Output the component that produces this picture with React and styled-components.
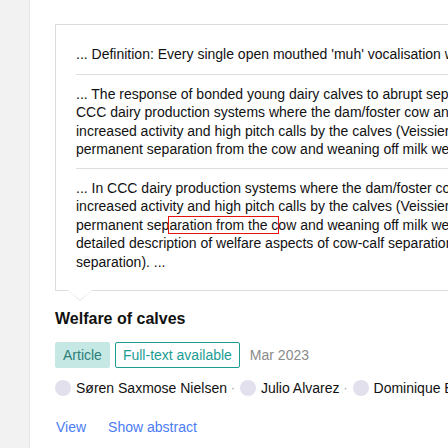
import React from "react";
import styled, { createGlobalStyle } from "styled-components";

const Global = createGlobalStyle`
  html, body { margin: 0; padding: 0; overflow: hidden; background: #fff; }
  body { font-family: "Liberation Sans", Arial, sans-serif; color: #111; }
`;

const Page = styled.div`
  display: flex;
  height: 448px;
  width: 448px;
  overflow: hidden;
`;

const Sidebar = styled.div`
  flex: 0 0 29px;
  background: #f2f2f2;
  border-right: 1px solid #e4e4e4;
`;

const Main = styled.div`
  flex: 1;
  padding: 24px 0 0 25px;
  min-width: 0;
`;

const Card = styled.div`
  position: relative;
  width: 620px;
  border: 1px solid #dcdcdc;
  padding: 20px 0 19px 20px;
  background: #fff;
  &::before, &::after {
    content: "";
    position: absolute;
    left: 12px;
    width: 0;
    height: 0;
    border-left: 12px solid transparent;
    border-right: 12px solid transparent;
  }
  &::before {
    bottom: -11px;
    border-top: 11px solid #dcdcdc;
  }
  &::after {
    bottom: -10px;
    border-top: 10px solid #fff;
  }
`;

const Snippet = styled.p`
  margin: 0;
  font-size: 14px;
  line-height: 18.5px;
  white-space: nowrap;
  color: #111;
  padding: ${(p) => (p.$first ? "0 0 10px" : p.$last ? "10px 0 0" : "10px 0 9px")};
  border-bottom: ${(p) => (p.$last ? "none" : "1px solid #dedede")};
`;

const Mark = styled.span`
  outline: 1px solid #e8120c;
`;

const Title = styled.h3`
  margin: 17px 0 0;
  font-size: 16px;
  font-weight: bold;
  line-height: 22px;
  color: #111;
`;

const Meta = styled.div`
  display: flex;
  align-items: center;
  gap: 5px;
  margin-top: 12px;
`;

const Chip = styled.span`
  display: inline-flex;
  align-items: center;
  height: 26px;
  box-sizing: border-box;
  padding: 0 7px;
  border-radius: 2px;
  font-size: 14px;
  color: ${(p) => (p.$outline ? "#1a9c93" : "#2d7f7a")};
  background: ${(p) => (p.$outline ? "#fff" : "#c6e8e4")};
  border: 1px solid ${(p) => (p.$outline ? "#1a9c93" : "#c6e8e4")};
`;

const Date = styled.span`
  margin-left: 5px;
  font-size: 14px;
  color: #8a8a8a;
`;

const Authors = styled.div`
  display: flex;
  align-items: center;
  height: 16px;
  white-space: nowrap;
  margin-top: 12px;
  font-size: 14px;
  color: #111;
`;

const Author = styled.span`
  display: inline-flex;
  align-items: center;
  gap: 5px;
`;

const Avatar = styled.span`
  width: 16px;
  height: 16px;
  border-radius: 50%;
  background: #e1e0ec;
  flex: 0 0 16px;
`;

const Sep = styled.span`
  color: #999;
  font-size: 12px;
  margin: 0 5px 0 4px;
`;

const Links = styled.div`
  display: flex;
  gap: 22px;
  margin-top: 23px;
  font-size: 14px;
  line-height: 16px;
  padding-left: 1px;
`;

const Link = styled.a`
  color: #4b7cf3;
  text-decoration: none;
  cursor: pointer;
`;

export default function App() {
  return (
    <>
      <Global />
      <Page>
        <Sidebar />
        <Main>
          <Card>
            <Snippet $first>
              ... Definition: Every single open mouthed 'muh' vocalisation with a clearly audible sound ...
            </Snippet>
            <Snippet>
              ... The response of bonded young dairy calves to abrupt separation from the dam has been studied in
              <br />
              CCC dairy production systems where the dam/foster cow and calf have been kept together, resulting in
              <br />
              increased activity and high pitch calls by the calves (Veissier et al., 2013). Also the effect of
              <br />
              permanent separation from the cow and weaning off milk were investigated in several studies ...
            </Snippet>
            <Snippet $last>
              ... In CCC dairy production systems where the dam/foster cow and calf are separated abruptly,
              <br />
              increased activity and high pitch calls by the calves (Veissier et al., 2013) have been reported after
              <br />
              permanent sep<Mark>aration from the c</Mark>ow and weaning off milk were investigated (see Meagher for a
              <br />
              detailed description of welfare aspects of cow-calf separation and the methods of gradual
              <br />
              separation). ...
            </Snippet>
          </Card>
          <Title>Welfare of calves</Title>
          <Meta>
            <Chip>Article</Chip>
            <Chip $outline>Full-text available</Chip>
            <Date>Mar 2023</Date>
          </Meta>
          <Authors>
            <Author>
              <Avatar />
              Søren Saxmose Nielsen
            </Author>
            <Sep>·</Sep>
            <Author>
              <Avatar />
              Julio Alvarez
            </Author>
            <Sep>·</Sep>
            <Author>
              <Avatar />
              Dominique Bicout
            </Author>
          </Authors>
          <Links>
            <Link>View</Link>
            <Link>Show abstract</Link>
          </Links>
        </Main>
      </Page>
    </>
  );
}
